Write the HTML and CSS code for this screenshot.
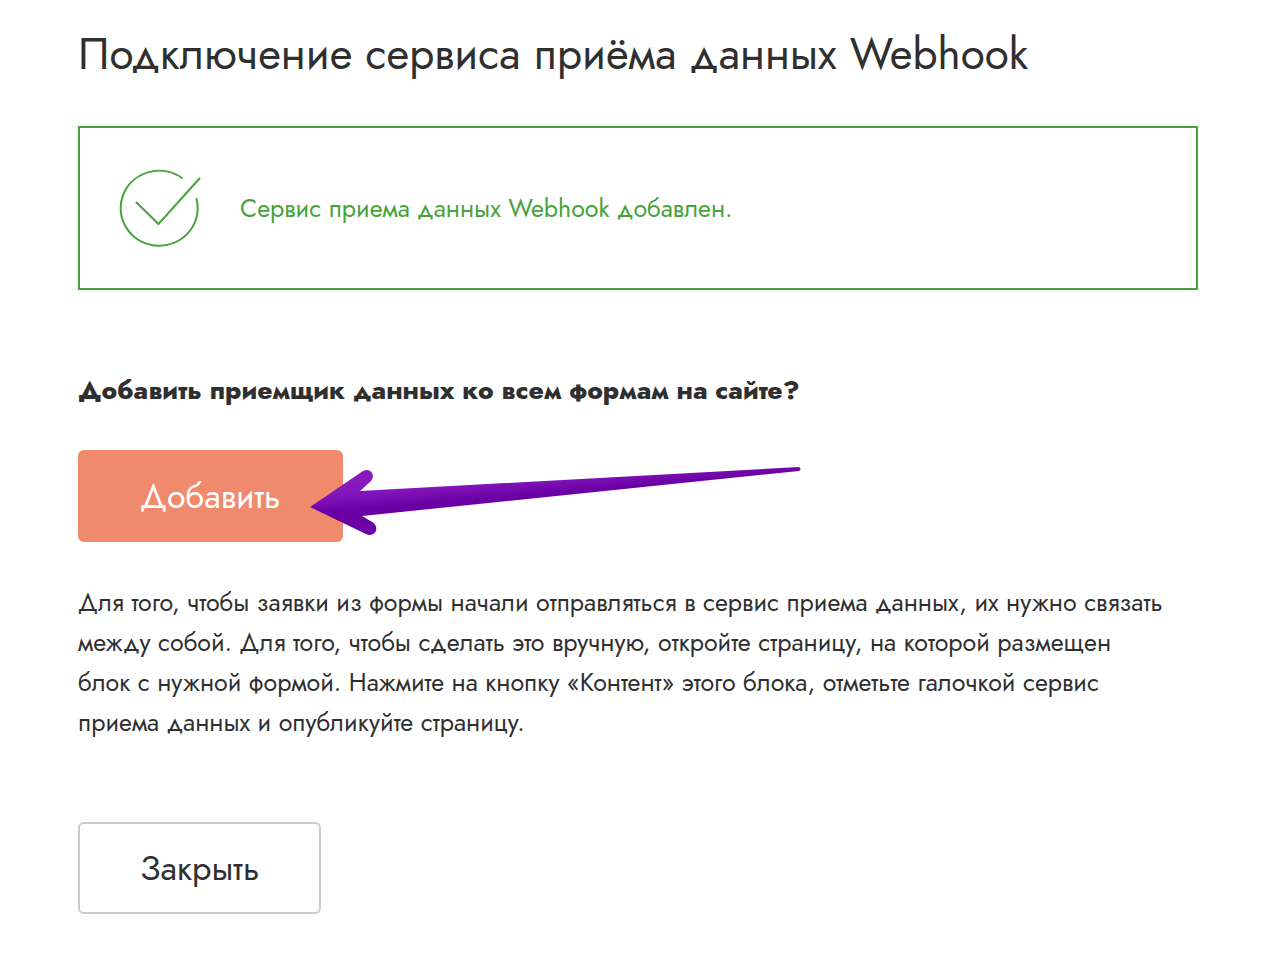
FILE: index.html
```
<!DOCTYPE html>
<html lang="ru">
<head>
    <meta charset="UTF-8">
    <meta name="viewport" content="width=device-width, initial-scale=1.0">
    <title>Подключение Webhook</title>
    <link rel="stylesheet" href="styles.css">
</head>
<body>
    <main class="container">
        <h1>Подключение сервиса приёма данных Webhook</h1>

        <div class="success">
            <svg class="success-icon" width="84" height="80" viewBox="0 0 84 80" fill="none" stroke="currentColor" stroke-width="2" stroke-linecap="round">
                <path d="M64 10A38.500 37.500 0 1 0 78.500 31"/>
                <path d="M18.500 34.500L40.500 56L81.500 10.500"/>
            </svg>
            <p>Сервис приема данных Webhook добавлен.</p>
        </div>

        <h2>Добавить приемщик данных ко всем формам на сайте?</h2>

        <div class="add">
            <button class="btn btn-add" type="button">Добавить</button>
            <svg class="arrow" width="492" height="70" viewBox="0 0 492 70">
                <defs>
                    <linearGradient id="arrowFill" gradientUnits="userSpaceOnUse" x1="60" y1="16" x2="63" y2="52">
                        <stop offset="0" stop-color="#861abe"/>
                        <stop offset="0.300" stop-color="#8014b8"/>
                        <stop offset="0.700" stop-color="#6a00a4"/>
                        <stop offset="1" stop-color="#6a00a4"/>
                    </linearGradient>
                </defs>
                <path fill="url(#arrowFill)" d="M0 40L53 4C60 0 66 8 61 14L50 24L489 0Q492 2 489 4L52 49L63 55.500C70 61 65 70 57 67.500Z"/>
            </svg>
        </div>

        <p class="text">Для того, чтобы заявки из формы начали отправляться в сервис приема данных, их нужно связать между собой. Для того, чтобы сделать это вручную, откройте страницу, на которой размещен блок с нужной формой. Нажмите на кнопку «Контент» этого блока, отметьте галочкой сервис приема данных и опубликуйте страницу.</p>

        <button class="btn btn-close" type="button">Закрыть</button>
    </main>
</body>
</html>
```
FILE: styles.css
```
body {
    margin: 0;
    background-color: #fff;
    color: #2f2f2f;
    font-family: "Futura PT", Jost, Lato, sans-serif;
}
.container {
    padding: 24px 86px 64px 78px;
}
h1 {
    margin: 0 0 42px;
    font-size: 44px;
    line-height: 60px;
    font-weight: 400;
}
.success {
    display: flex;
    align-items: center;
    gap: 38px;
    padding: 40px 38px;
    border: 2px solid #46a33a;
    color: #46a33a;
    font-size: 25px;
}
.success p {
    margin: 0;
}
h2 {
    margin: 80px 0 40px;
    font-size: 26px;
    line-height: 40px;
    font-weight: 800;
}
.add {
    position: relative;
}
.btn {
    display: block;
    padding: 0 60px;
    height: 92px;
    border: 2px solid #ccc;
    border-radius: 6px;
    background-color: #fff;
    color: #2f2f2f;
    font-family: inherit;
    font-size: 34px;
    cursor: pointer;
}
.btn-add {
    border-color: #f08a6c;
    background-color: #f08a6c;
    color: #fff;
}
.arrow {
    position: absolute;
    top: 17px;
    left: 232px;
}
.text {
    margin: 40px 0 80px;
    padding-right: 32px;
    font-size: 25px;
    line-height: 40px;
}
```
